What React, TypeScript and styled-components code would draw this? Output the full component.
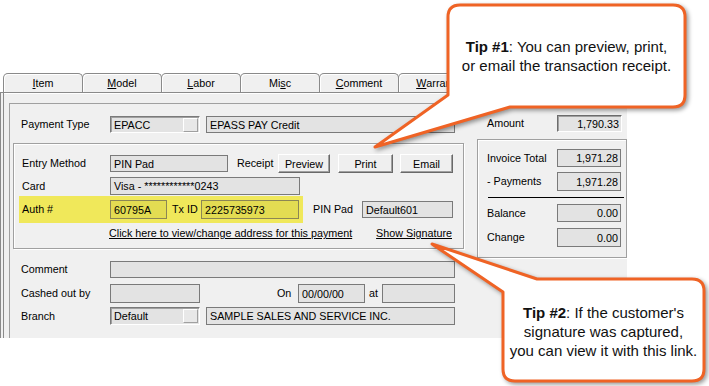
import React from 'react';
import styled, { createGlobalStyle } from 'styled-components';

const GlobalStyle = createGlobalStyle`
  html, body {
    margin: 0;
    padding: 0;
    background: #fff;
  }
  body {
    font-family: "Liberation Sans", Arial, sans-serif;
    font-size: 10.75px;
    color: #000;
  }
`;

const tabs = [
    { key: 'I', rest: 'tem' },
    { key: 'M', rest: 'odel' },
    { key: 'L', rest: 'abor' },
    { key: 'Mi', rest: 'sc', under: 's' },
    { key: 'C', rest: 'omment' },
    { key: 'W', rest: 'arranty' },
];

export default function App() {
    return (
        <>
            <GlobalStyle />
            <Page>
                <Window>
                    <TabStrip>
                        {tabs.map((t) =>
                            t.under ? (
                                <Tab key={t.key}>
                                    Mi<u>s</u>c
                                </Tab>
                            ) : (
                                <Tab key={t.key}>
                                    <u>{t.key}</u>
                                    {t.rest}
                                </Tab>
                            )
                        )}
                    </TabStrip>
                    <TabBody>
                        <InnerPanel>
                            <LeftCol>
                                <Row $mt={12} $pl={11}>
                                    <Label $w={89}>Payment Type</Label>
                                    <Combo $w={90} $h={17}>
                                        EPACC
                                        <ComboButton />
                                    </Combo>
                                    <Field $w={249} $h={17} $ml={6}>
                                        EPASS PAY Credit
                                    </Field>
                                </Row>

                                <GroupBox $w={451} $h={106} $mt={10} $ml={3}>
                                    <Row $mt={10} $pl={8}>
                                        <Label $w={88}>Entry Method</Label>
                                        <Field $w={118} $h={17}>
                                            PIN Pad
                                        </Field>
                                        <Label $ml={9} $w={41}>
                                            Receipt
                                        </Label>
                                        <Button $w={52}>Preview</Button>
                                        <Button $w={55} $ml={8}>
                                            Print
                                        </Button>
                                        <Button $w={53} $ml={7}>
                                            Email
                                        </Button>
                                    </Row>
                                    <Row $mt={4} $pl={8}>
                                        <Label $w={88}>Card</Label>
                                        <Field $w={190} $h={18}>
                                            Visa - ************0243
                                        </Field>
                                    </Row>
                                    <Row $mt={1} $pl={5}>
                                        <Highlight>
                                            <Label $w={88}>Auth #</Label>
                                            <Field $w={57} $h={19} $yellow>
                                                60795A
                                            </Field>
                                            <Label $ml={5} $w={29}>
                                                Tx ID
                                            </Label>
                                            <Field $w={98} $h={19} $yellow>
                                                2225735973
                                            </Field>
                                        </Highlight>
                                        <Label $ml={10} $w={49}>
                                            PIN Pad
                                        </Label>
                                        <Field $w={91} $h={17}>
                                            Default601
                                        </Field>
                                    </Row>
                                    <LinkRow>
                                        <Link>Click here to view/change address for this payment</Link>
                                        <Link>Show Signature</Link>
                                    </LinkRow>
                                </GroupBox>

                                <Row $mt={12} $pl={11}>
                                    <Label $w={89}>Comment</Label>
                                    <Field $w={345} $h={17} />
                                </Row>
                                <Row $mt={6} $pl={11}>
                                    <Label $w={89}>Cashed out by</Label>
                                    <Field $w={90} $h={19} />
                                    <Label $ml={77} $w={21}>
                                        On
                                    </Label>
                                    <Field $w={67} $h={19}>
                                        00/00/00
                                    </Field>
                                    <Label $ml={4} $w={13}>
                                        at
                                    </Label>
                                    <Field $w={73} $h={19} />
                                </Row>
                                <Row $mt={4} $pl={11}>
                                    <Label $w={89}>Branch</Label>
                                    <Combo $w={90} $h={18}>
                                        Default
                                        <ComboButton />
                                    </Combo>
                                    <Field $w={249} $h={18} $ml={6}>
                                        SAMPLE SALES AND SERVICE INC.
                                    </Field>
                                </Row>
                            </LeftCol>

                            <RightCol>
                                <Row $mt={11} $pl={10}>
                                    <Label $w={70}>Amount</Label>
                                    <Field $w={65} $h={17} $right $sunken>
                                        1,790.33
                                    </Field>
                                </Row>
                                <GroupBox $w={150} $h={119} $mt={7}>
                                    <Row $mt={9} $pl={9}>
                                        <Label $w={70}>Invoice Total</Label>
                                        <Field $w={64} $h={18} $right>
                                            1,971.28
                                        </Field>
                                    </Row>
                                    <Row $mt={5} $pl={9}>
                                        <Label $w={70}>- Payments</Label>
                                        <Field $w={64} $h={19} $right>
                                            1,971.28
                                        </Field>
                                    </Row>
                                    <Divider />
                                    <Row $mt={6} $pl={9}>
                                        <Label $w={70}>Balance</Label>
                                        <Field $w={64} $h={18} $right>
                                            0.00
                                        </Field>
                                    </Row>
                                    <Row $mt={6} $pl={9}>
                                        <Label $w={70}>Change</Label>
                                        <Field $w={64} $h={19} $right>
                                            0.00
                                        </Field>
                                    </Row>
                                </GroupBox>
                            </RightCol>
                        </InnerPanel>
                    </TabBody>
                </Window>

                <Callout $left={360} $top={0} $w={340} $h={160}>
                    <svg width="340" height="160">
                        <path d="M 100 5 H 313 Q 325 5 325 17 V 95 Q 325 107 313 107 H 150 L 15 147 L 88 95 V 17 Q 88 5 100 5 Z" />
                    </svg>
                    <TipText $left={88} $top={37} $w={237}>
                        <b>Tip #1</b>: You can preview, print,
                        <br />
                        or email the transaction receipt.
                    </TipText>
                </Callout>

                <Callout $left={420} $top={230} $w={289} $h={156}>
                    <svg width="289" height="156">
                        <path d="M 117 49 H 272 Q 284 49 284 61 V 139 Q 284 151 272 151 H 95 Q 83 151 83 139 V 62 L 12 14 Z" />
                    </svg>
                    <TipText $left={83} $top={73} $w={201}>
                        <b>Tip #2</b>: If the customer's
                        <br />
                        signature was captured,
                        <br />
                        you can view it with this link.
                    </TipText>
                </Callout>
            </Page>
        </>
    );
}

// Styles ------------

const Page = styled.div`
    position: relative;
    width: 709px;
    height: 386px;
    overflow: hidden;
    padding-top: 73px;
    box-sizing: border-box;
`;

const Window = styled.div`
    width: 627px;
    height: 265px;
    background: #f0f0f0;
    display: flex;
    flex-direction: column;
`;

const TabStrip = styled.div`
    height: 19px;
    display: flex;
    padding-left: 3px;
    background: #fff;
    border-bottom: 1px solid #8a8a8a;
`;

const Tab = styled.div`
    width: 80px;
    height: 19px;
    margin-right: -1px;
    box-sizing: border-box;
    flex: none;
    display: flex;
    align-items: center;
    justify-content: center;
    background: #f0f0f0;
    border: 1px solid #8a8a8a;
    border-bottom: none;
    border-radius: 5px 5px 0 0;
    box-shadow: inset 1px 1px 0 #fff;
`;

const TabBody = styled.div`
    flex: 1;
    display: flex;
    border-left: 4px double #8a8a8a;
    box-shadow: inset 0 1px 0 #fff;
    padding: 10px 0 0 5px;
`;

const InnerPanel = styled.div`
    flex: 1;
    display: flex;
    border-top: 1px solid #a0a0a0;
    border-left: 1px solid #a0a0a0;
`;

const LeftCol = styled.div`
    width: 460px;
    display: flex;
    flex-direction: column;
`;

const RightCol = styled.div`
    width: 150px;
    margin-left: 7px;
    display: flex;
    flex-direction: column;
`;

const Row = styled.div<{ $mt?: number; $pl?: number }>`
    display: flex;
    align-items: center;
    margin-top: ${(p) => p.$mt || 0}px;
    padding-left: ${(p) => p.$pl || 0}px;
`;

const Label = styled.span<{ $w?: number; $ml?: number }>`
    width: ${(p) => (p.$w ? `${p.$w}px` : 'auto')};
    margin-left: ${(p) => p.$ml || 0}px;
    padding-bottom: 1px;
    flex: none;
    white-space: nowrap;
`;

const Field = styled.div<{
    $w: number;
    $h: number;
    $ml?: number;
    $right?: boolean;
    $yellow?: boolean;
    $sunken?: boolean;
}>`
    width: ${(p) => p.$w}px;
    height: ${(p) => p.$h}px;
    margin-left: ${(p) => p.$ml || 0}px;
    box-sizing: border-box;
    flex: none;
    display: flex;
    align-items: center;
    justify-content: ${(p) => (p.$right ? 'flex-end' : 'flex-start')};
    padding: 0 ${(p) => (p.$right ? 2 : 3)}px;
    white-space: nowrap;
    overflow: hidden;
    background: ${(p) => (p.$yellow ? '#e3dc52' : '#e3e3e3')};
    border: 1px solid ${(p) => (p.$yellow ? '#8c8654' : '#7a7a7a')};
    ${(p) =>
        p.$sunken &&
        `border-color: #6d6d6d #fff #fff #6d6d6d; box-shadow: inset 1px 1px 0 #a0a0a0;`}
`;

const Combo = styled(Field)`
    padding-right: 1px;
    border-color: #7a7a7a #fff #fff #7a7a7a;
    box-shadow: inset 1px 1px 0 #a0a0a0;
`;

const ComboButton = styled.span`
    width: 15px;
    height: 14px;
    margin-left: auto;
    box-sizing: border-box;
    background: #e8e8e8;
    border: 1px solid;
    border-color: #fff #a0a0a0 #a0a0a0 #fff;
`;

const Button = styled.div<{ $w: number; $ml?: number }>`
    width: ${(p) => p.$w}px;
    height: 19px;
    margin-left: ${(p) => p.$ml || 0}px;
    box-sizing: border-box;
    display: flex;
    align-items: center;
    justify-content: center;
    background: #efefef;
    border: 1px solid;
    border-color: #fff #696969 #696969 #fff;
    box-shadow: inset -1px -1px 0 #a0a0a0;
`;

const GroupBox = styled.div<{ $w: number; $h: number; $mt?: number; $ml?: number }>`
    width: ${(p) => p.$w}px;
    height: ${(p) => p.$h}px;
    margin-top: ${(p) => p.$mt || 0}px;
    margin-left: ${(p) => p.$ml || 0}px;
    box-sizing: border-box;
    border: 1px solid #a0a0a0;
    box-shadow: inset 1px 1px 0 #fff, 1px 1px 0 #fff;
    display: flex;
    flex-direction: column;
`;

const Highlight = styled.div`
    width: 284px;
    height: 27px;
    padding-left: 3px;
    box-sizing: border-box;
    display: flex;
    align-items: center;
    background: #f0e85a;
`;

const LinkRow = styled.div`
    display: flex;
    justify-content: space-between;
    width: 343px;
    margin: 4px 0 0 95px;
`;

const Link = styled.span`
    text-decoration: underline;
    white-space: nowrap;
`;

const Divider = styled.div`
    height: 1px;
    margin: 6px 0 0 10px;
    width: 136px;
    background: #000;
`;

const Callout = styled.div<{ $left: number; $top: number; $w: number; $h: number }>`
    position: absolute;
    left: ${(p) => p.$left}px;
    top: ${(p) => p.$top}px;
    width: ${(p) => p.$w}px;
    height: ${(p) => p.$h}px;

    svg {
        position: absolute;
        inset: 0;
        overflow: visible;
        filter: drop-shadow(2px 2px 2px rgba(0, 0, 0, 0.4));
    }
    path {
        fill: #fff;
        stroke: #ef6325;
        stroke-width: 3;
        stroke-linejoin: round;
    }
`;

const TipText = styled.div<{ $left: number; $top: number; $w: number }>`
    position: absolute;
    left: ${(p) => p.$left}px;
    top: ${(p) => p.$top}px;
    width: ${(p) => p.$w}px;
    text-align: center;
    font-family: "Liberation Sans", Arial, sans-serif;
    font-size: 15px;
    line-height: 19px;
    color: #111;
`;
